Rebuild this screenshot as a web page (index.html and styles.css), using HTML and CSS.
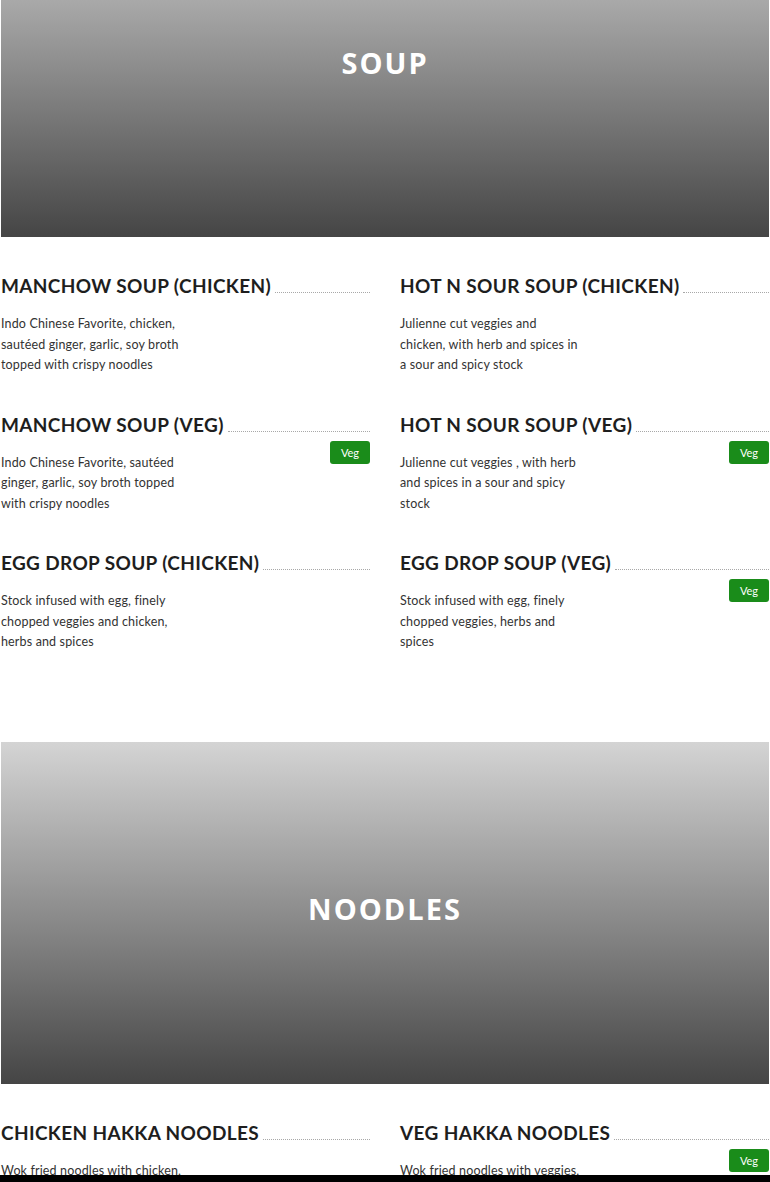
FILE: index.html
```html
<!DOCTYPE html>
<html>
<head>
<meta charset="utf-8">
<link rel="stylesheet" href="styles.css">
</head>
<body>
<section class="category">
  <div class="banner banner-soup"><h2>SOUP</h2></div>
  <div class="items">
    <div class="item">
      <div class="item-head"><h3>MANCHOW SOUP (CHICKEN)</h3><span class="dots"></span></div>
      <div class="item-body"><p>Indo Chinese Favorite, chicken, sautéed ginger, garlic, soy broth topped with crispy noodles</p></div>
    </div>
    <div class="item">
      <div class="item-head"><h3>HOT N SOUR SOUP (CHICKEN)</h3><span class="dots"></span></div>
      <div class="item-body"><p>Julienne cut veggies and chicken, with herb and spices in a sour and spicy stock</p></div>
    </div>
    <div class="item">
      <div class="item-head"><h3>MANCHOW SOUP (VEG)</h3><span class="dots"></span></div>
      <div class="item-body"><p>Indo Chinese Favorite, sautéed ginger, garlic, soy broth topped with crispy noodles</p><span class="badge">Veg</span></div>
    </div>
    <div class="item">
      <div class="item-head"><h3>HOT N SOUR SOUP (VEG)</h3><span class="dots"></span></div>
      <div class="item-body"><p>Julienne cut veggies , with herb and spices in a sour and spicy stock</p><span class="badge">Veg</span></div>
    </div>
    <div class="item">
      <div class="item-head"><h3>EGG DROP SOUP (CHICKEN)</h3><span class="dots"></span></div>
      <div class="item-body"><p>Stock infused with egg, finely chopped veggies and chicken, herbs and spices</p></div>
    </div>
    <div class="item">
      <div class="item-head"><h3>EGG DROP SOUP (VEG)</h3><span class="dots"></span></div>
      <div class="item-body"><p>Stock infused with egg, finely chopped veggies, herbs and spices</p><span class="badge">Veg</span></div>
    </div>
  </div>
</section>
<section class="category">
  <div class="banner banner-noodles"><h2>NOODLES</h2></div>
  <div class="items">
    <div class="item">
      <div class="item-head"><h3>CHICKEN HAKKA NOODLES</h3><span class="dots"></span></div>
      <div class="item-body"><p>Wok fried noodles with chicken, bell peppers, cabbage and spring onions</p></div>
    </div>
    <div class="item">
      <div class="item-head"><h3>VEG HAKKA NOODLES</h3><span class="dots"></span></div>
      <div class="item-body"><p>Wok fried noodles with veggies, bell peppers, cabbage and spring onions</p><span class="badge">Veg</span></div>
    </div>
  </div>
</section>
<div class="bottom-bar"></div>
</body>
</html>
```

FILE: styles.css
```css
* { box-sizing: border-box; }
html, body { margin: 0; padding: 0; background: #fff; }
body {
  padding: 0 1px;
  font-family: "Lato", "Open Sans", sans-serif;
  color: #222;
}
.category { padding-bottom: 89px; }
.banner {
  display: flex;
  justify-content: center;
}
.banner h2 {
  margin: 0;
  color: #fff;
  font-family: "Open Sans", sans-serif;
  font-weight: 700;
  font-size: 29px;
  letter-spacing: 2px;
  line-height: 40px;
}
.banner-soup {
  height: 237px;
  padding-top: 43px;
  background: linear-gradient(to bottom, #a9a9a9 0%, #454545 100%);
}
.banner-noodles {
  height: 342px;
  padding-top: 147px;
  background: linear-gradient(to bottom, #d4d4d4 0%, #454545 100%);
}
.items {
  display: grid;
  grid-template-columns: 1fr 1fr;
  column-gap: 30px;
  row-gap: 37px;
  padding-top: 37px;
}
.item-head {
  display: flex;
  align-items: baseline;
}
.item-head h3 {
  margin: 0;
  font-family: "Lato", sans-serif;
  font-weight: 700;
  font-size: 19px;
  letter-spacing: 0.35px;
  line-height: 24px;
  color: #1e1e1e;
  white-space: nowrap;
}
.dots {
  flex: 1;
  margin-left: 4px;
  border-bottom: 1px dotted #a8a8a8;
}
.item-body {
  display: flex;
  justify-content: space-between;
  align-items: flex-start;
  margin-top: 4px;
}
.item-body p {
  margin: 0;
  padding-top: 12px;
  max-width: 184px;
  font-family: "Lato", sans-serif;
  font-size: 12.5px;
  letter-spacing: 0.15px;
  line-height: 20.5px;
  color: #333;
}
.badge {
  display: inline-block;
  flex-shrink: 0;
  width: 40px;
  height: 23px;
  line-height: 23px;
  text-align: center;
  background: #1a8c1a;
  color: #fff;
  border-radius: 3px;
  font-size: 11px;
  font-family: "Lato", sans-serif;
}
.bottom-bar {
  position: fixed;
  left: 0;
  right: 0;
  bottom: 0;
  height: 7px;
  background: #000;
}
```
